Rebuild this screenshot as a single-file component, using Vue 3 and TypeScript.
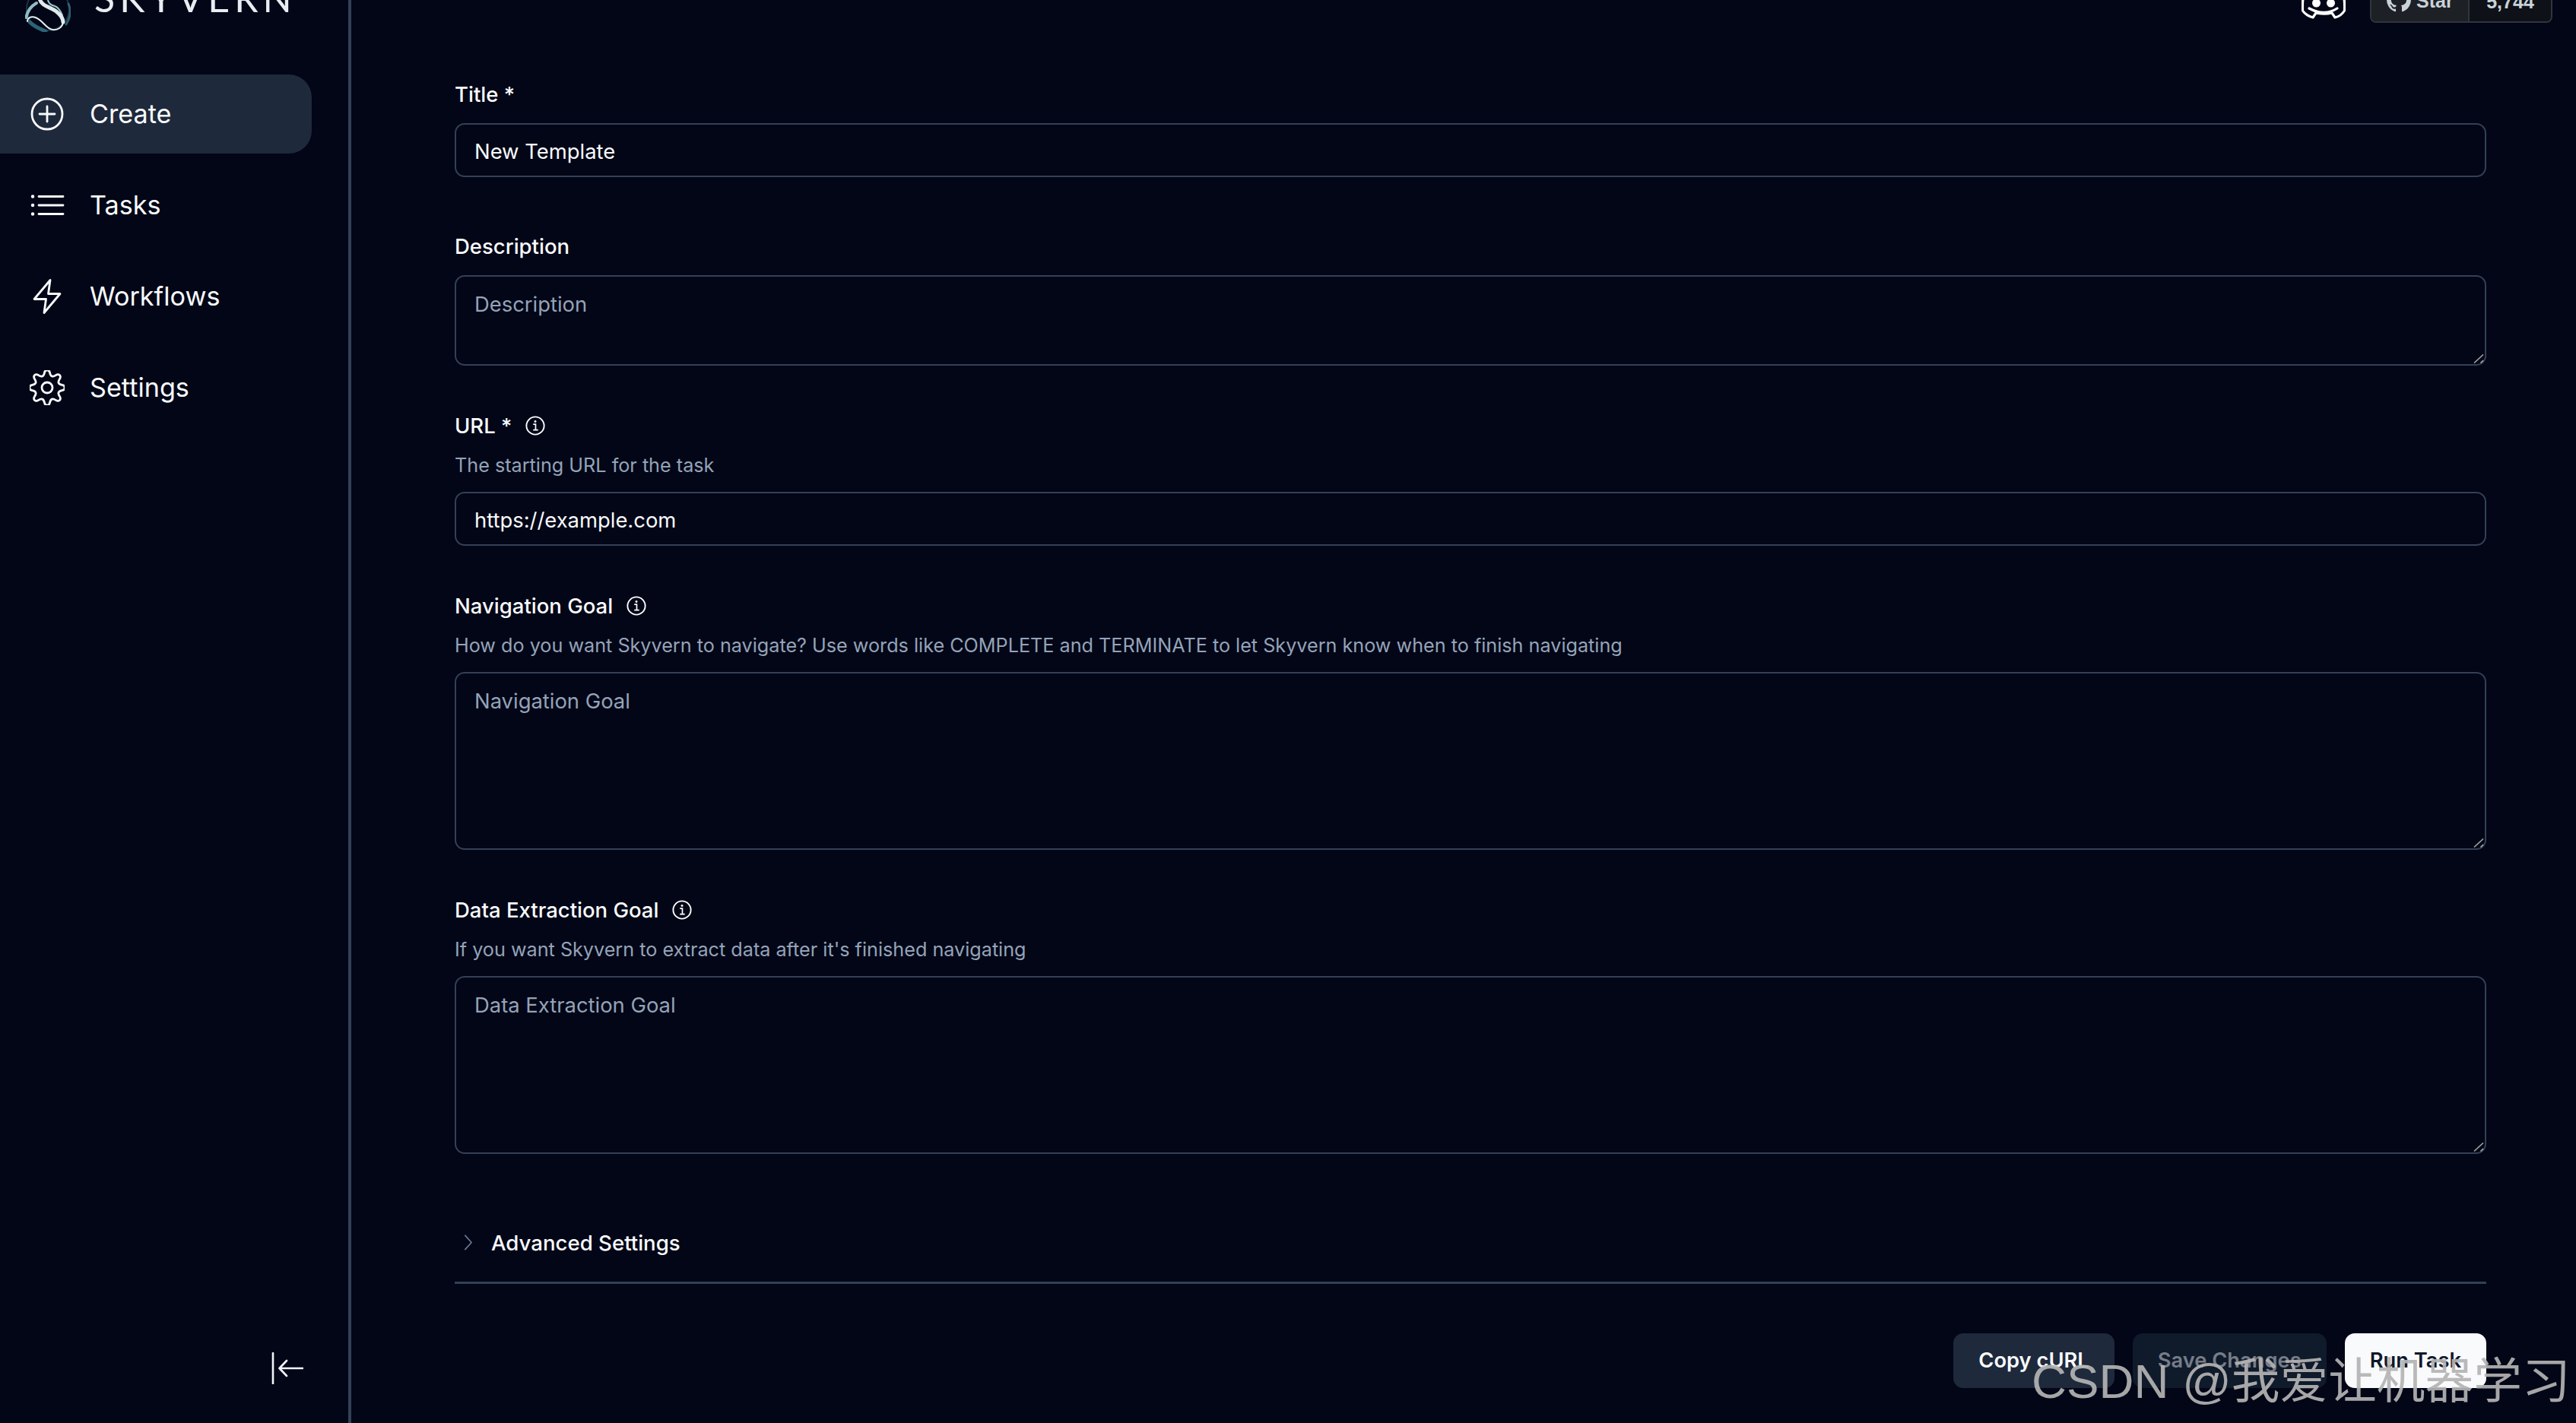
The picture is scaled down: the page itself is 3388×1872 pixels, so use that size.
<script setup lang="ts">
interface Field {
  id: string
  label: string
  info?: boolean
  help?: string
  kind: 'input' | 'textarea'
  value?: string
  placeholder?: string
  size?: string
}

const navItems = [
  { name: 'Create', icon: 'create', active: true },
  { name: 'Tasks', icon: 'tasks', active: false },
  { name: 'Workflows', icon: 'workflows', active: false },
  { name: 'Settings', icon: 'settings', active: false },
]

const fields: Field[] = [
  { id: 'title', label: 'Title *', kind: 'input', value: 'New Template', size: 'first' },
  { id: 'description', label: 'Description', kind: 'textarea', placeholder: 'Description', size: 'short' },
  { id: 'url', label: 'URL *', info: true, help: 'The starting URL for the task', kind: 'input', value: 'https://example.com' },
  {
    id: 'nav',
    label: 'Navigation Goal',
    info: true,
    help: 'How do you want Skyvern to navigate? Use words like COMPLETE and TERMINATE to let Skyvern know when to finish navigating',
    kind: 'textarea',
    placeholder: 'Navigation Goal',
    size: 'tall',
  },
  {
    id: 'data',
    label: 'Data Extraction Goal',
    info: true,
    help: "If you want Skyvern to extract data after it's finished navigating",
    kind: 'textarea',
    placeholder: 'Data Extraction Goal',
    size: 'tall',
  },
]

function gearPath(): string {
  const pts: [number, number][] = []
  for (let k = 0; k < 8; k++) {
    const base = (k * 45 - 90) * (Math.PI / 180)
    const spec: [number, number][] = [
      [-15, 16.5],
      [-7, 23.4],
      [7, 23.4],
      [15, 16.5],
    ]
    for (const [deg, r] of spec) {
      const a = base + (deg * Math.PI) / 180
      pts.push([23 + r * Math.cos(a), 23 + r * Math.sin(a)])
    }
  }
  const mid = (a: [number, number], b: [number, number]) => `${((a[0] + b[0]) / 2).toFixed(2)} ${((a[1] + b[1]) / 2).toFixed(2)}`
  let d = `M${mid(pts[pts.length - 1], pts[0])}`
  pts.forEach((p, i) => {
    d += `Q${p[0].toFixed(2)} ${p[1].toFixed(2)} ${mid(p, pts[(i + 1) % pts.length])}`
  })
  return d + 'Z'
}
const gear = gearPath()
</script>

<template>
  <div class="shell">
    <aside class="sidebar">
      <div class="brand">
        <svg class="logo" viewBox="33 -18 60 60" fill="none" stroke-linecap="round">
          <circle cx="63" cy="12" r="28" stroke="#2a5562" stroke-width="2" opacity="0.6" />
          <path d="M48 4C41 8 36 14 34.500 23" stroke="#8fbcc5" stroke-width="4" />
          <path d="M90 5C94 14 92 24 87 32" stroke="#2f5f6e" stroke-width="3" />
          <path d="M39 29C45 35 52 38 60 41" stroke="#2d6475" stroke-width="5" />
          <path d="M66-8C60 0 64 6 72 8 78 10 80 16 82 20" stroke="#9cc7cf" stroke-width="2" />
          <path d="M52-2C54 8 66 9 74 15 79 19 83 24 83 29" stroke="#dfeaec" stroke-width="5" />
          <path d="M83 29C82 36 76 40 69 39 60 38 56 25 45 22.500 40 21.500 36 24 36 28" stroke="#e6eff1" stroke-width="2" />
        </svg>
        <span class="wordmark">SKYVERN</span>
      </div>

      <nav class="nav">
        <a v-for="item in navItems" :key="item.name" class="nav-item" :class="{ active: item.active }">
          <svg class="nav-icon" viewBox="0 0 46 46" fill="none" stroke="currentColor" stroke-width="2.800" stroke-linecap="round" stroke-linejoin="round">
            <template v-if="item.icon === 'create'">
              <circle cx="23" cy="23" r="20" />
              <path d="M23 13v20M13 23h20" />
            </template>
            <template v-else-if="item.icon === 'tasks'">
              <path d="M12 11.500h32M12 23h32M12 34.500h32" />
              <path d="M4 11.500h.1M4 23h.1M4 34.500h.1" stroke-width="4.400" />
            </template>
            <template v-else-if="item.icon === 'workflows'">
              <path d="M27 1.500 6 26.500h15.500L19 44.500 40 19.500H24.500z" />
            </template>
            <template v-else>
              <circle cx="23" cy="23" r="7" />
              <path :d="gear" />
            </template>
          </svg>
          <span>{{ item.name }}</span>
        </a>
      </nav>

      <button class="collapse" type="button" aria-label="Collapse">
        <svg viewBox="0 0 42 42" fill="none" stroke="#f1f5f9" stroke-width="2.600" stroke-linecap="round" stroke-linejoin="round">
          <path d="M2 1v40" />
          <path d="M41 21H11M20 11 10.500 21 20 31" />
        </svg>
      </button>
    </aside>

    <main class="main">
      <header class="topbar">
        <svg class="discord" viewBox="3028 -20 58 45" fill="none" stroke="#fff" stroke-width="3.200" stroke-linecap="round" stroke-linejoin="round">
          <path d="M3040-16C3036-15 3033-13 3032-12 3030-5 3029 3 3029.500 14 3032 18 3038 22 3043 23L3047 17C3054 18.500 3062 18.500 3068 17L3072 23C3077 22 3082 18 3084.500 14 3085 3 3084-5 3082-12 3080-14 3077-15 3074-16" />
          <path d="M3038 11C3050 18 3064 18 3075 11" />
          <circle cx="3047.500" cy="4" r="5.500" fill="#fff" stroke="none" />
          <circle cx="3066.500" cy="4" r="5.500" fill="#fff" stroke="none" />
        </svg>
        <div class="gh">
          <span class="gh-star">
            <svg viewBox="0 0 34 34" fill="#c9d1d9"><path d="M17 0a17 17 0 0 0-5.400 33.100c.9.100 1.200-.4 1.200-.8v-3c-4.700 1-5.700-2.300-5.700-2.300-.8-2-1.900-2.500-1.900-2.500-1.500-1 .1-1 .1-1 1.700.1 2.600 1.700 2.600 1.700 1.500 2.600 4 1.900 4.900 1.400.2-1.100.6-1.800 1.100-2.200-3.800-.4-7.800-1.900-7.800-8.400 0-1.900.7-3.400 1.700-4.600-.2-.4-.8-2.200.2-4.500 0 0 1.400-.5 4.700 1.700a16 16 0 0 1 8.500 0c3.300-2.200 4.700-1.700 4.700-1.700 1 2.300.4 4.100.2 4.500 1.100 1.200 1.700 2.700 1.700 4.600 0 6.500-4 7.900-7.800 8.400.6.500 1.200 1.600 1.200 3.200v4.700c0 .5.300 1 1.200.8A17 17 0 0 0 17 0z" /></svg>
            <span class="gh-text">Star</span>
          </span>
          <span class="gh-count">5,744</span>
        </div>
      </header>

      <form class="form" @submit.prevent>
        <div v-for="field in fields" :key="field.id" class="field" :class="field.size">
          <div class="label">
            <span>{{ field.label }}</span>
            <svg v-if="field.info" class="info" viewBox="0 0 28 28" fill="none" stroke="#fff">
              <circle cx="14" cy="14" r="12.500" stroke-width="2" />
              <path d="M11 12h3.500v8M11 20h7" stroke-width="1.800" />
              <circle cx="14" cy="8" r="1.600" fill="#fff" stroke="none" />
            </svg>
          </div>
          <p v-if="field.help" class="help">{{ field.help }}</p>
          <input v-if="field.kind === 'input'" class="control" type="text" :value="field.value" />
          <div v-else class="area-wrap">
            <textarea class="control area" :placeholder="field.placeholder"></textarea>
            <svg class="grip" viewBox="0 0 14 12" fill="none" stroke="#a3a3a3" stroke-width="1.600">
              <path d="M1 11.500 13 .5M9.500 11.500 13 8.200" />
            </svg>
          </div>
        </div>

        <div class="advanced">
          <svg class="chevron" viewBox="0 0 12 22" fill="none" stroke="#64748b" stroke-width="2" stroke-linecap="round" stroke-linejoin="round">
            <path d="M2 1l9 10-9 10" />
          </svg>
          <span>Advanced Settings</span>
        </div>

        <div class="actions">
          <button type="button" class="btn secondary">Copy cURL</button>
          <button type="button" class="btn disabled">Save Changes</button>
          <button type="button" class="btn primary">Run Task</button>
        </div>
      </form>
    </main>

    <div class="watermark">CSDN @我爱让机器学习</div>
  </div>
</template>

<style scoped>
.shell {
  position: relative;
  display: flex;
  width: 3388px;
  height: 1872px;
  overflow: hidden;
  background: #020617;
  color: #f8fafc;
  font-family: Inter, "Noto Sans", sans-serif;
}
.sidebar {
  display: flex;
  flex-direction: column;
  width: 462px;
  flex: none;
  height: 1872px;
  border-right: 4px solid #334155;
  box-sizing: border-box;
}
.brand {
  display: flex;
  align-items: flex-end;
  gap: 31px;
  height: 42px;
  margin-left: 33px;
  flex: none;
}
.logo {
  width: 60px;
  height: 60px;
  flex: none;
}
.wordmark {
  font-family: Lato, Inter, sans-serif;
  font-size: 50px;
  font-weight: 400;
  line-height: 36px;
  height: 36px;
  letter-spacing: 6px;
  margin-bottom: 27px;
  color: #e8edf2;
  white-space: nowrap;
}
.nav {
  display: flex;
  flex-direction: column;
  gap: 16px;
  width: 410px;
  margin-top: 56px;
}
.nav-item {
  display: flex;
  align-items: center;
  gap: 33px;
  height: 104px;
  padding-left: 39px;
  border-radius: 0 30px 30px 0;
  font-size: 34.200px;
  line-height: 52px;
  color: #f8fafc;
}
.nav-item.active {
  background: #1e293b;
}
.nav-icon {
  width: 46px;
  height: 46px;
  flex: none;
}
.collapse {
  width: 42px;
  height: 42px;
  padding: 0;
  margin: auto 0 51px 357px;
  background: none;
  border: 0;
}
.collapse svg {
  display: block;
  width: 42px;
  height: 42px;
}
.main {
  flex: 1;
  min-width: 0;
  display: flex;
  flex-direction: column;
  padding: 0 118px 0 136px;
}
.topbar {
  display: flex;
  justify-content: flex-end;
  align-items: flex-end;
  gap: 32px;
  height: 30px;
  margin-right: -87px;
  flex: none;
}
.discord {
  width: 58px;
  height: 45px;
  margin-bottom: 5px;
  flex: none;
}
.gh {
  display: flex;
  height: 60px;
  width: 240px;
  box-sizing: border-box;
  border: 2px solid #30363d;
  border-radius: 8px;
  color: #c9d1d9;
  font: 600 25px/56px "Liberation Sans", Arial, sans-serif;
  overflow: hidden;
  flex: none;
}
.gh-star {
  width: 129px;
  display: flex;
  align-items: center;
  gap: 7px;
  padding-left: 20px;
  box-sizing: border-box;
  background: #1d2025;
  border-right: 2px solid #30363d;
}
.gh-star svg {
  width: 32px;
  height: 32px;
  flex: none;
}
.gh-text {
  padding-top: 2px;
}
.gh-count {
  flex: 1;
  text-align: center;
  background: #0e1117;
  padding-top: 2px;
}
.form {
  display: flex;
  flex-direction: column;
  margin-top: 76px;
}
.field {
  display: flex;
  flex-direction: column;
  margin-bottom: 61px;
}
.field.first {
  margin-bottom: 73px;
}
.label {
  display: flex;
  align-items: center;
  gap: 18px;
  height: 36px;
  font-size: 27.500px;
  font-weight: 500;
  line-height: 36px;
  color: #f8fafc;
  margin-bottom: 20px;
}
.info {
  width: 26px;
  height: 26px;
  flex: none;
}
.help {
  margin: -2px 0 19px;
  font-size: 25.200px;
  line-height: 32px;
  color: #94a3b8;
}
.control {
  display: block;
  width: 100%;
  height: 71px;
  box-sizing: border-box;
  padding: 2px 24px 0;
  background: transparent;
  border: 2px solid #334155;
  border-radius: 13px;
  outline: none;
  font: 400 27.400px/42px Inter, sans-serif;
  color: #f8fafc;
}
.control::placeholder {
  color: #94a3b8;
  opacity: 1;
}
.area-wrap {
  position: relative;
}
.area {
  height: 234px;
  padding: 15px 24px;
  resize: none;
}
.short .area {
  height: 119px;
}
.grip {
  position: absolute;
  right: 3px;
  bottom: 3px;
  width: 14px;
  height: 12px;
}
.advanced {
  display: flex;
  align-items: center;
  gap: 25px;
  height: 108px;
  margin-top: 2px;
  padding: 2px 0 0 12px;
  box-sizing: border-box;
  border-bottom: 3px solid #334155;
  font-size: 27.600px;
  font-weight: 500;
  color: #f8fafc;
}
.chevron {
  width: 11px;
  height: 21px;
  flex: none;
}
.actions {
  display: flex;
  justify-content: flex-end;
  gap: 24px;
  margin-top: 65px;
}
.btn {
  height: 72px;
  padding: 0 33px;
  border: 0;
  border-radius: 13px;
  font: 600 27.300px/36px Inter, sans-serif;
}
.secondary {
  background: #1e293b;
  color: #f8fafc;
}
.disabled {
  background: #0f1a2a;
  color: #767d89;
}
.primary {
  background: #f8fafc;
  color: #0f172a;
}
.watermark {
  position: absolute;
  left: 2672px;
  top: 1780px;
  font-family: "Liberation Sans", "Noto Sans CJK SC", sans-serif;
  font-size: 63.700px;
  line-height: 74px;
  color: #b4b4b4;
  opacity: 0.92;
  white-space: nowrap;
}
</style>
